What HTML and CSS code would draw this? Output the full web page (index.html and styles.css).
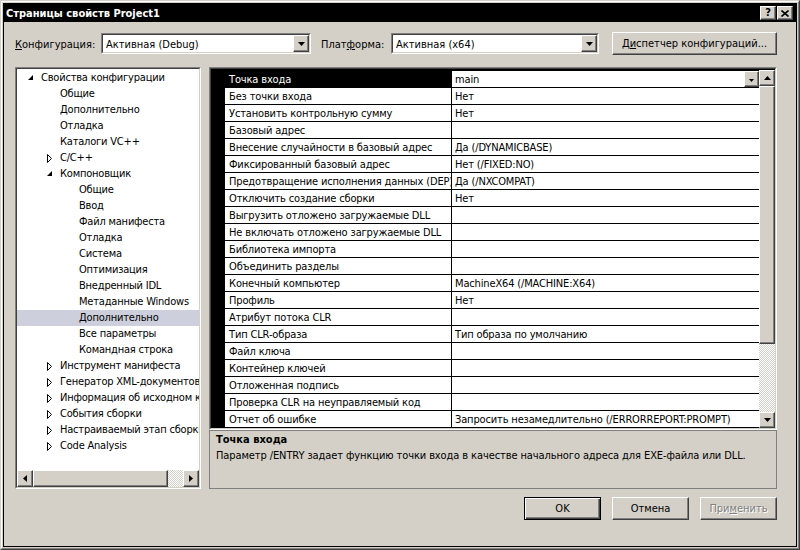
FILE: index.html
```html
<!DOCTYPE html>
<html lang="ru">
<head>
<meta charset="utf-8">
<title>Страницы свойств Project1</title>
<link rel="stylesheet" href="styles.css">
</head>
<body>
<div class="window">
 <div class="frame">
  <div class="inner">
   <div class="titlebar">
    <span class="title">Страницы свойств Project1</span>
    <span class="capbtns">
     <span class="capbtn raised">?</span>
     <span class="capbtn raised"><svg width="8" height="7" viewBox="0 0 8 7"><path d="M0.5 0.5 L7.5 6.5 M7.5 0.5 L0.5 6.5" stroke="#000" stroke-width="1.6"/></svg></span>
    </span>
   </div>

   <div class="toolbar">
    <span class="lbl lbl-conf"><u>К</u>онфигурация:</span>
    <div class="combo combo-conf"><div class="combo-in"><span class="combo-text">Активная (Debug)</span><span class="dropbtn raised"><svg width="7" height="4" viewBox="0 0 7 4"><polygon points="0,0 7,0 3.5,4" fill="#000"/></svg></span></div></div>
    <span class="lbl lbl-plat">Плат<u>ф</u>орма:</span>
    <div class="combo combo-plat"><div class="combo-in"><span class="combo-text">Активная (x64)</span><span class="dropbtn raised"><svg width="7" height="4" viewBox="0 0 7 4"><polygon points="0,0 7,0 3.5,4" fill="#000"/></svg></span></div></div>
    <span class="btn raised btn-manager">Д<u>и</u>спетчер конфигураций...</span>
   </div>

   <div class="main">
    <div class="tree sunken">
     <div class="sunken-in tree-in">
      <div class="tree-items">
       <div class="node l0"><span class="exp"><svg width="6" height="6" viewBox="0 0 6 6"><polygon points="5,0 5,5 0,5" fill="#000"/></svg></span><span class="ntext">Свойства конфигурации</span></div>
       <div class="node l1"><span class="exp"></span><span class="ntext">Общие</span></div>
       <div class="node l1"><span class="exp"></span><span class="ntext">Дополнительно</span></div>
       <div class="node l1"><span class="exp"></span><span class="ntext">Отладка</span></div>
       <div class="node l1"><span class="exp"></span><span class="ntext">Каталоги VC++</span></div>
       <div class="node l1"><span class="exp"><svg width="5" height="9" viewBox="0 0 5 9"><polygon points="0.5,0.5 4.5,4.5 0.5,8.5" fill="#fff" stroke="#000" stroke-width="1"/></svg></span><span class="ntext">C/C++</span></div>
       <div class="node l1"><span class="exp"><svg width="6" height="6" viewBox="0 0 6 6"><polygon points="5,0 5,5 0,5" fill="#000"/></svg></span><span class="ntext">Компоновщик</span></div>
       <div class="node l2"><span class="exp"></span><span class="ntext">Общие</span></div>
       <div class="node l2"><span class="exp"></span><span class="ntext">Ввод</span></div>
       <div class="node l2"><span class="exp"></span><span class="ntext">Файл манифеста</span></div>
       <div class="node l2"><span class="exp"></span><span class="ntext">Отладка</span></div>
       <div class="node l2"><span class="exp"></span><span class="ntext">Система</span></div>
       <div class="node l2"><span class="exp"></span><span class="ntext">Оптимизация</span></div>
       <div class="node l2"><span class="exp"></span><span class="ntext">Внедренный IDL</span></div>
       <div class="node l2"><span class="exp"></span><span class="ntext">Метаданные Windows</span></div>
       <div class="node l2 selected"><span class="exp"></span><span class="ntext">Дополнительно</span></div>
       <div class="node l2"><span class="exp"></span><span class="ntext">Все параметры</span></div>
       <div class="node l2"><span class="exp"></span><span class="ntext">Командная строка</span></div>
       <div class="node l1"><span class="exp"><svg width="5" height="9" viewBox="0 0 5 9"><polygon points="0.5,0.5 4.5,4.5 0.5,8.5" fill="#fff" stroke="#000" stroke-width="1"/></svg></span><span class="ntext">Инструмент манифеста</span></div>
       <div class="node l1"><span class="exp"><svg width="5" height="9" viewBox="0 0 5 9"><polygon points="0.5,0.5 4.5,4.5 0.5,8.5" fill="#fff" stroke="#000" stroke-width="1"/></svg></span><span class="ntext">Генератор XML-документов</span></div>
       <div class="node l1"><span class="exp"><svg width="5" height="9" viewBox="0 0 5 9"><polygon points="0.5,0.5 4.5,4.5 0.5,8.5" fill="#fff" stroke="#000" stroke-width="1"/></svg></span><span class="ntext">Информация об исходном коде</span></div>
       <div class="node l1"><span class="exp"><svg width="5" height="9" viewBox="0 0 5 9"><polygon points="0.5,0.5 4.5,4.5 0.5,8.5" fill="#fff" stroke="#000" stroke-width="1"/></svg></span><span class="ntext">События сборки</span></div>
       <div class="node l1"><span class="exp"><svg width="5" height="9" viewBox="0 0 5 9"><polygon points="0.5,0.5 4.5,4.5 0.5,8.5" fill="#fff" stroke="#000" stroke-width="1"/></svg></span><span class="ntext">Настраиваемый этап сборки</span></div>
       <div class="node l1"><span class="exp"><svg width="5" height="9" viewBox="0 0 5 9"><polygon points="0.5,0.5 4.5,4.5 0.5,8.5" fill="#fff" stroke="#000" stroke-width="1"/></svg></span><span class="ntext">Code Analysis</span></div>
      </div>
      <div class="hscroll">
       <span class="sbtn raised"><svg width="4" height="7" viewBox="0 0 4 7"><polygon points="4,0 4,7 0,3.5" fill="#000"/></svg></span>
       <span class="hthumb raised"></span>
       <span class="track"></span>
       <span class="sbtn raised"><svg width="4" height="7" viewBox="0 0 4 7"><polygon points="0,0 0,7 4,3.5" fill="#000"/></svg></span>
      </div>
     </div>
    </div>

    <div class="right">
     <div class="grid sunken">
      <div class="sunken-in grid-in">
       <div class="rows">
        <div class="row sel"><span class="mg"></span><span class="name">Точка входа</span><span class="value">main<span class="minidrop raised"><svg width="5" height="3" viewBox="0 0 5 3"><polygon points="0,0 5,0 2.5,3" fill="#000"/></svg></span></span></div>
        <div class="row"><span class="mg"></span><span class="name">Без точки входа</span><span class="value">Нет</span></div>
        <div class="row"><span class="mg"></span><span class="name">Установить контрольную сумму</span><span class="value">Нет</span></div>
        <div class="row"><span class="mg"></span><span class="name">Базовый адрес</span><span class="value"></span></div>
        <div class="row"><span class="mg"></span><span class="name">Внесение случайности в базовый адрес</span><span class="value">Да (/DYNAMICBASE)</span></div>
        <div class="row"><span class="mg"></span><span class="name">Фиксированный базовый адрес</span><span class="value">Нет (/FIXED:NO)</span></div>
        <div class="row"><span class="mg"></span><span class="name">Предотвращение исполнения данных (DEP)</span><span class="value">Да (/NXCOMPAT)</span></div>
        <div class="row"><span class="mg"></span><span class="name">Отключить создание сборки</span><span class="value">Нет</span></div>
        <div class="row"><span class="mg"></span><span class="name">Выгрузить отложено загружаемые DLL</span><span class="value"></span></div>
        <div class="row"><span class="mg"></span><span class="name">Не включать отложено загружаемые DLL</span><span class="value"></span></div>
        <div class="row"><span class="mg"></span><span class="name">Библиотека импорта</span><span class="value"></span></div>
        <div class="row"><span class="mg"></span><span class="name">Объединить разделы</span><span class="value"></span></div>
        <div class="row"><span class="mg"></span><span class="name">Конечный компьютер</span><span class="value">MachineX64 (/MACHINE:X64)</span></div>
        <div class="row"><span class="mg"></span><span class="name">Профиль</span><span class="value">Нет</span></div>
        <div class="row"><span class="mg"></span><span class="name">Атрибут потока CLR</span><span class="value"></span></div>
        <div class="row"><span class="mg"></span><span class="name">Тип CLR-образа</span><span class="value">Тип образа по умолчанию</span></div>
        <div class="row"><span class="mg"></span><span class="name">Файл ключа</span><span class="value"></span></div>
        <div class="row"><span class="mg"></span><span class="name">Контейнер ключей</span><span class="value"></span></div>
        <div class="row"><span class="mg"></span><span class="name">Отложенная подпись</span><span class="value"></span></div>
        <div class="row"><span class="mg"></span><span class="name">Проверка CLR на неуправляемый код</span><span class="value"></span></div>
        <div class="row"><span class="mg"></span><span class="name">Отчет об ошибке</span><span class="value">Запросить незамедлительно (/ERRORREPORT:PROMPT)</span></div>
       </div>
       <div class="vscroll">
        <span class="sbtn raised"><svg width="7" height="4" viewBox="0 0 7 4"><polygon points="0,4 7,4 3.5,0" fill="#000"/></svg></span>
        <span class="vthumb raised"></span>
        <span class="track"></span>
        <span class="sbtn raised"><svg width="7" height="4" viewBox="0 0 7 4"><polygon points="0,0 7,0 3.5,4" fill="#000"/></svg></span>
       </div>
      </div>
     </div>
     <div class="desc">
      <div class="desc-title">Точка входа</div>
      <div class="desc-text">Параметр /ENTRY задает функцию точки входа в качестве начального адреса для EXE-файла или DLL.</div>
     </div>
    </div>
   </div>

   <div class="footer">
    <span class="btn raised btn-default">OK</span>
    <span class="btn raised">Отмена</span>
    <span class="btn raised btn-disabled">При<u>м</u>енить</span>
   </div>
  </div>
 </div>
</div>
</body>
</html>
```
FILE: styles.css
```css
* { box-sizing: border-box; }
html, body { margin: 0; padding: 0; }
body {
  font-family: "DejaVu Sans Condensed", "DejaVu Sans", sans-serif;
  font-size: 11px;
  color: #000;
  background: #d4d0c8;
}
svg { display: block; }

.window {
  width: 800px;
  height: 550px;
  border: 1px solid;
  border-color: #d4d0c8 #404040 #404040 #d4d0c8;
  background: #d4d0c8;
}
.frame {
  height: 100%;
  border: 1px solid;
  border-color: #fff #808080 #808080 #fff;
  padding: 1px;
}
.inner {
  height: 100%;
  border: 1px solid #000;
  display: flex;
  flex-direction: column;
}

/* raised 3D element */
.raised {
  background: #d4d0c8;
  border: 1px solid;
  border-color: #fff #404040 #404040 #fff;
  box-shadow: inset -1px -1px 0 #808080;
}

/* sunken panels */
.sunken {
  border: 1px solid;
  border-color: #808080 #fff #fff #808080;
}
.sunken-in {
  height: 100%;
  border: 1px solid;
  border-color: #404040 #d4d0c8 #d4d0c8 #404040;
}

/* title bar */
.titlebar {
  height: 18px;
  flex: none;
  background: #000;
  color: #fff;
  display: flex;
  align-items: center;
  justify-content: space-between;
  padding: 0 3px 0 2px;
}
.title { font-weight: bold; font-size: 11px; padding-top: 1px; }
.capbtns { display: flex; gap: 1px; }
.capbtn {
  width: 16px;
  height: 14px;
  display: flex;
  align-items: center;
  justify-content: center;
  color: #000;
  font-weight: bold;
  font-size: 11px;
  line-height: 12px;
}

/* toolbar */
.toolbar {
  flex: none;
  height: 23px;
  margin-top: 10px;
  padding-left: 11px;
  display: flex;
  align-items: center;
}
.lbl { display: block; padding-top: 2px; }
.lbl-conf { width: 86px; }
.lbl-plat { width: 70px; margin-left: 10px; }
.combo {
  height: 21px;
  border: 1px solid;
  border-color: #808080 #fff #fff #808080;
}
.combo-in {
  height: 100%;
  border: 1px solid;
  border-color: #404040 #d4d0c8 #d4d0c8 #404040;
  background: #fff;
  display: flex;
  align-items: center;
}
.combo-conf { width: 210px; }
.combo-plat { width: 208px; }
.combo-text { flex: 1; padding-left: 3px; padding-top: 1px; white-space: nowrap; overflow: hidden; }
.dropbtn {
  width: 16px;
  height: 17px;
  display: flex;
  align-items: center;
  justify-content: center;
}
.btn {
  height: 23px;
  display: flex;
  align-items: center;
  justify-content: center;
  white-space: nowrap;
}
.btn-manager { width: 165px; margin-left: 13px; }

/* main area */
.main {
  flex: none;
  height: 422px;
  margin-top: 12px;
  padding-left: 11px;
  display: flex;
  gap: 8px;
}
.tree { width: 186px; height: 100%; }
.tree-in {
  display: flex;
  flex-direction: column;
  background: #fff;
}
.tree-items {
  flex: 1;
  overflow: hidden;
  padding-top: 1px;
  letter-spacing: -0.2px;
}
.node {
  height: 16px;
  display: flex;
  align-items: center;
  white-space: nowrap;
}
.node.l0 { padding-left: 11px; }
.node.l1 { padding-left: 30px; }
.node.l2 { padding-left: 49px; }
.node.selected { background: #cdcfdc; }
.exp {
  width: 13px;
  flex: none;
  display: flex;
  align-items: center;
}
.ntext { line-height: 16px; }

.hscroll {
  flex: none;
  height: 17px;
  display: flex;
}
.hscroll .sbtn { width: 16px; height: 17px; }
.hthumb { width: 135px; height: 17px; }
.track {
  flex: 1;
  background: repeating-conic-gradient(#fff 0 25%, #d4d0c8 0 50%) 0 0 / 2px 2px;
}
.sbtn {
  display: flex;
  align-items: center;
  justify-content: center;
  flex: none;
}

.right {
  width: 568px;
  height: 100%;
  display: flex;
  flex-direction: column;
}
.grid { height: 363px; flex: none; }
.grid-in { display: flex; background: #000; }
.rows { width: 548px; border-top: 2px solid #000; letter-spacing: -0.15px; }
.row {
  height: 17px;
  display: flex;
  border-bottom: 1px solid #000;
}
.mg { width: 14px; flex: none; background: #000; }
.name {
  width: 226px;
  flex: none;
  background: #fff;
  padding-left: 4px;
  padding-top: 1px;
  line-height: 15px;
  white-space: nowrap;
  overflow: hidden;
}
.value {
  flex: 1;
  background: #fff;
  border-left: 1px solid #000;
  padding-left: 3px;
  white-space: nowrap;
  overflow: hidden;
  display: flex;
  align-items: center;
}
.row.sel .name { background: #000; color: #fff; }
.row .value { padding-top: 1px; }
.minidrop {
  margin-left: auto;
  width: 15px;
  height: 16px;
  margin-top: -1px;
  display: flex;
  align-items: center;
  justify-content: center;
  padding-top: 2px;
}
.vscroll {
  width: 16px;
  display: flex;
  flex-direction: column;
  padding-top: 1px;
}
.vscroll .sbtn { width: 16px; height: 16px; }
.vthumb { height: 258px; flex: none; }

.desc {
  flex: 1;
  border: 1px solid #808080;
  padding: 1px 6px 1px;
  line-height: 16px;
  letter-spacing: -0.1px;
}
.desc-title { font-weight: bold; letter-spacing: 0; }

/* footer */
.footer {
  flex: none;
  height: 23px;
  margin-top: 8px;
  padding-right: 19px;
  display: flex;
  justify-content: flex-end;
  gap: 11px;
}
.footer .btn { width: 77px; }
.btn-default {
  border-color: #000;
  box-shadow: inset 1px 1px 0 #fff, inset -1px -1px 0 #404040, inset -2px -2px 0 #808080;
}
.btn-disabled {
  color: #808080;
  text-shadow: 1px 1px 0 #fff;
}
```
